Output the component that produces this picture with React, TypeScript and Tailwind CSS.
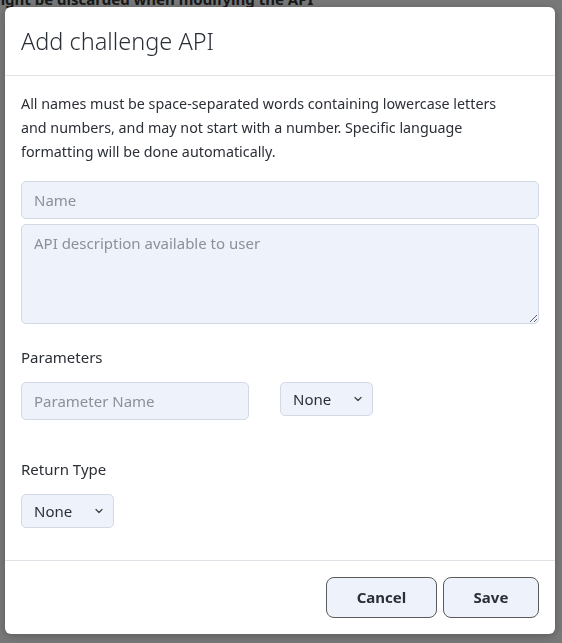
import { ChevronDown } from 'lucide-react';

const font = { fontFamily: '"Noto Sans", "Open Sans", sans-serif' };

function Select({ className }: { className?: string }) {
  return (
    <div className={`relative ${className ?? ''}`}>
      <select
        defaultValue="None"
        className="w-full h-full appearance-none rounded-[5px] border border-[#d3d9e4] bg-[#eef2fa] pl-3 pr-6 text-[15px] text-[#2b2f36] focus:outline-none"
      >
        <option>None</option>
        <option>Number</option>
        <option>String</option>
        <option>Boolean</option>
      </select>
      <ChevronDown
        size={12}
        strokeWidth={2.5}
        className="pointer-events-none absolute right-[9px] top-1/2 -translate-y-1/2 text-[#444]"
      />
    </div>
  );
}

export default function App() {
  return (
    <div className="min-h-screen bg-white text-[#2b2f36]" style={font}>
      <p className="-mt-[12px] -ml-[14px] whitespace-nowrap text-[15px] font-bold text-[#333]">
        might be discarded when modifying the API
      </p>

      <div className="fixed inset-0 overflow-hidden bg-black/[0.53]">
        <div className="ml-[5px] mt-[7px] w-[550px] rounded-[6px] bg-white shadow-[0_2px_10px_rgba(0,0,0,0.25)]">
          <div className="flex h-[69px] items-center border-b border-[#dfe2e6] px-4">
            <h2 className="pt-[2px] text-[23.5px] font-light text-[#2b2f36]">Add challenge API</h2>
          </div>

          <div className="flex flex-col px-4 pb-[16px] pt-[16px]">
            <p className="text-[14.3px] leading-[24px]">
              All names must be space-separated words containing lowercase letters
              <br />
              and numbers, and may not start with a number. Specific language
              <br />
              formatting will be done automatically.
            </p>

            <input
              type="text"
              placeholder="Name"
              className="mt-[17px] h-[38px] rounded-[5px] border border-[#d3d9e4] bg-[#eef2fa] px-3 text-[15px] placeholder:text-[#8c9099] focus:outline-none"
            />
            <textarea
              placeholder="API description available to user"
              className="mt-[5px] h-[100px] rounded-[5px] border border-[#d3d9e4] bg-[#eef2fa] px-3 py-[6px] text-[15px] leading-[24px] placeholder:text-[#8c9099] focus:outline-none"
            />

            <label className="mt-[21px] text-[15px] leading-[24px]">Parameters</label>
            <div className="mt-[13px] flex items-start gap-[31px]">
              <input
                type="text"
                placeholder="Parameter Name"
                className="h-[38px] w-[228px] rounded-[5px] border border-[#d3d9e4] bg-[#eef2fa] px-3 text-[15px] placeholder:text-[#8c9099] focus:outline-none"
              />
              <Select className="h-[34px] w-[93px]" />
            </div>

            <label className="mt-[37px] text-[15px] leading-[24px]">Return Type</label>
            <Select className="mt-[13px] h-[34px] w-[93px]" />
          </div>

          <div className="mt-[16px] flex justify-end gap-[6px] border-t border-[#dfe2e6] px-4 pb-[16px] pt-[16px]">
            <button
              type="button"
              className="h-[41px] w-[111px] rounded-[8px] border border-[#5a5a5a] bg-[#eef2fa] text-[15px] font-bold text-[#2b2f36]"
            >
              Cancel
            </button>
            <button
              type="button"
              className="h-[41px] w-[96px] rounded-[8px] border border-[#5a5a5a] bg-[#eef2fa] text-[15px] font-bold text-[#2b2f36]"
            >
              Save
            </button>
          </div>
        </div>
      </div>
    </div>
  );
}
